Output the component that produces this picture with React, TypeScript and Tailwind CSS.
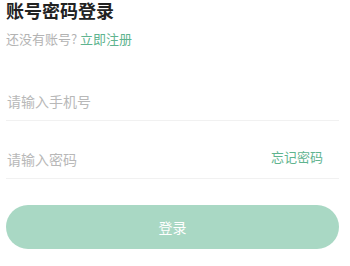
import React from "react";

export default function App() {
  const font = { fontFamily: '"Noto Sans CJK SC", "Noto Sans", sans-serif' };
  return (
    <div className="w-[350px] h-[266px] bg-white overflow-hidden" style={font}>
      <div className="pl-[6px] pr-[11px] flex flex-col">
        <h1 className="text-[18px] leading-[20px] font-bold text-[#222222]">账号密码登录</h1>
        <div className="mt-[11px] text-[13px] leading-[16px] text-[#b3b3b3]">
          还没有账号? <span className="text-[#5fb48f]">立即注册</span>
        </div>
        <div className="mt-[34px] h-[40px] flex items-center border-b border-[#f1f1f1]">
          <span className="text-[14px] text-[#b8b8b8] pl-[1px] pt-[1px]">请输入手机号</span>
        </div>
        <div className="mt-[18px] h-[40px] flex items-center justify-between border-b border-[#f1f1f1]">
          <span className="text-[14px] text-[#b8b8b8] pl-[1px] pt-[2px]">请输入密码</span>
          <span className="text-[13px] text-[#5fb48f] mr-[16px] mb-[4px]">忘记密码</span>
        </div>
      </div>
      <div className="pl-[6px] pr-[11px] mt-[26px]">
        <button className="w-full h-[44px] rounded-full bg-[#a9d8c4] text-white text-[14px] flex items-center justify-center" style={font}>
          登录
        </button>
      </div>
    </div>
  );
}
